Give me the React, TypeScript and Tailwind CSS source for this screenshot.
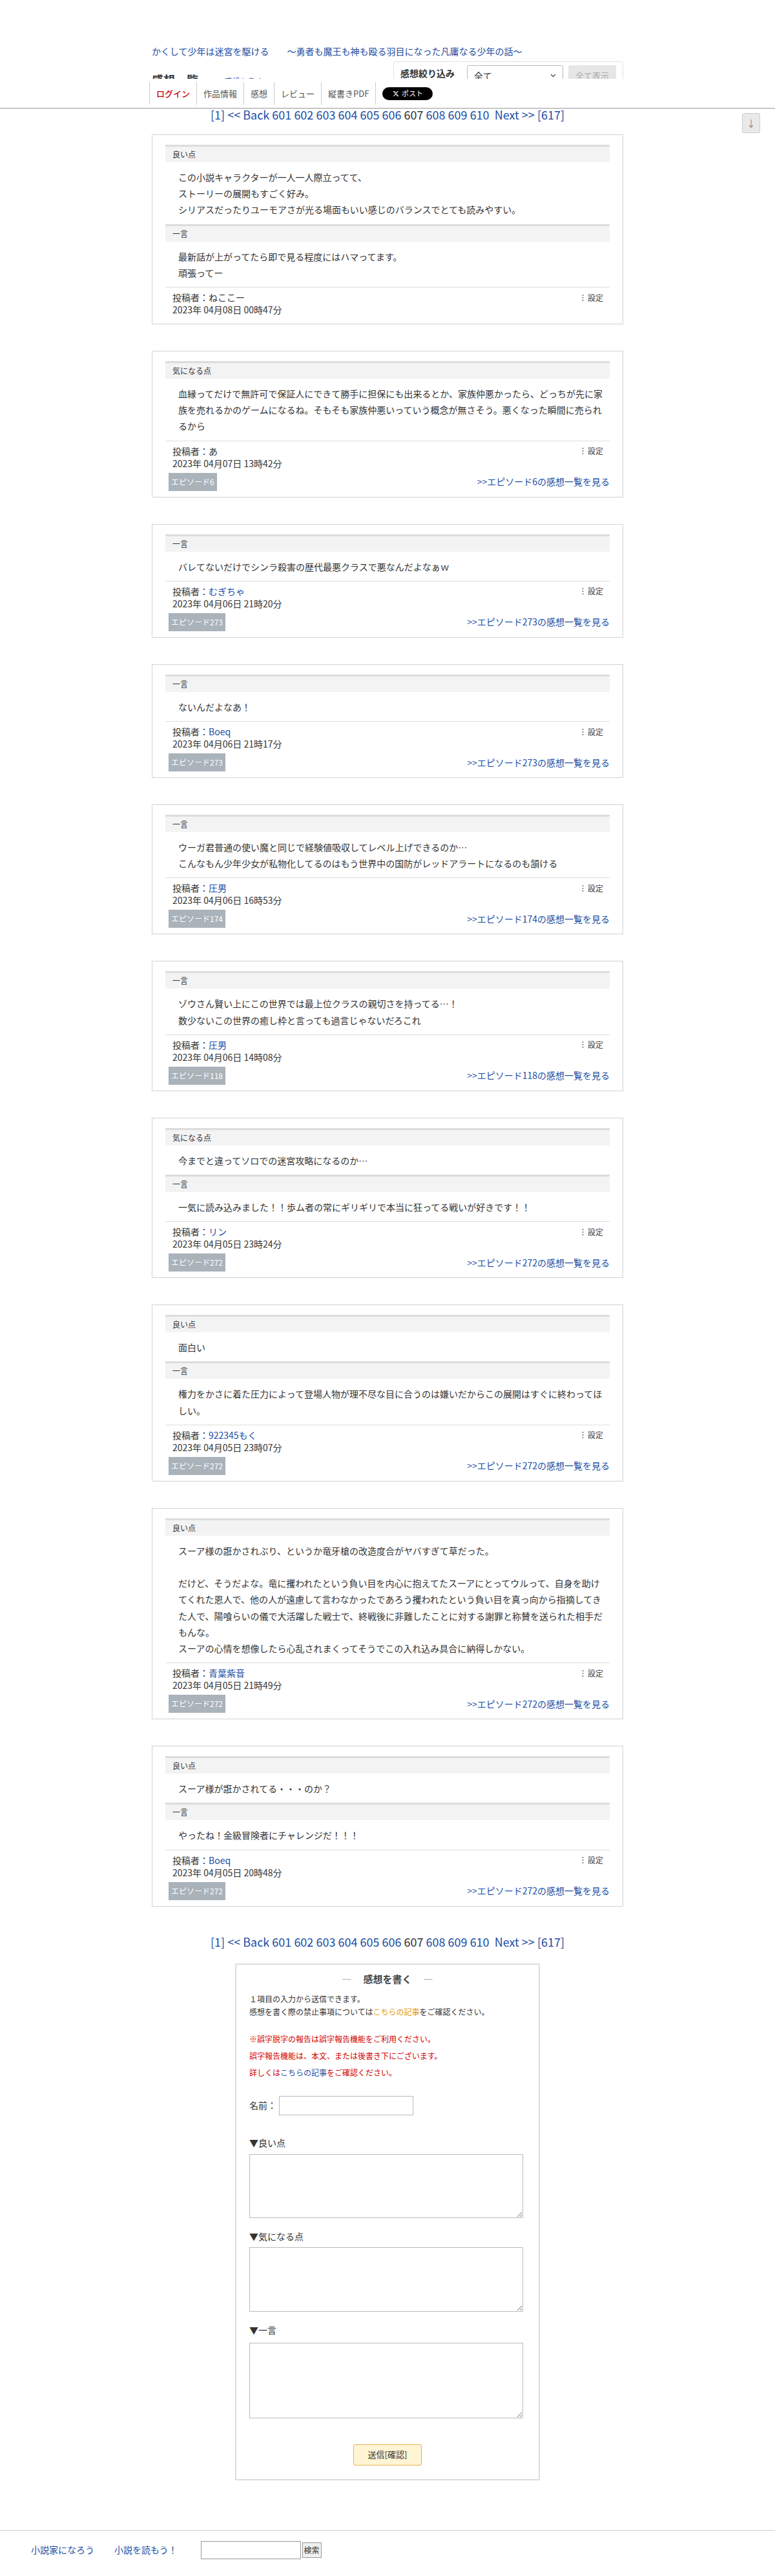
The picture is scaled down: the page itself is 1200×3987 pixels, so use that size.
import React from "react"

type Section = { label: string; lines: string[] }
type Comment = {
  sections: Section[]
  author: string
  authorLink?: boolean
  date: string
  episode?: string
}

const comments: Comment[] = [
  {
    sections: [
      {
        label: "良い点",
        lines: [
          "この小説キャラクターが一人一人際立ってて、",
          "ストーリーの展開もすごく好み。",
          "シリアスだったりユーモアさが光る場面もいい感じのバランスでとても読みやすい。",
        ],
      },
      { label: "一言", lines: ["最新話が上がってたら即で見る程度にはハマってます。", "頑張ってー"] },
    ],
    author: "ねここー",
    date: "2023年 04月08日 00時47分",
  },
  {
    sections: [
      {
        label: "気になる点",
        lines: [
          "血縁ってだけで無許可で保証人にできて勝手に担保にも出来るとか、家族仲悪かったら、どっちが先に家族を売れるかのゲームになるね。そもそも家族仲悪いっていう概念が無さそう。悪くなった瞬間に売られるから",
        ],
      },
    ],
    author: "あ",
    date: "2023年 04月07日 13時42分",
    episode: "6",
  },
  {
    sections: [{ label: "一言", lines: ["バレてないだけでシンラ殺害の歴代最悪クラスで悪なんだよなぁｗ"] }],
    author: "むぎちゃ",
    authorLink: true,
    date: "2023年 04月06日 21時20分",
    episode: "273",
  },
  {
    sections: [{ label: "一言", lines: ["ないんだよなあ！"] }],
    author: "Boeq",
    authorLink: true,
    date: "2023年 04月06日 21時17分",
    episode: "273",
  },
  {
    sections: [
      {
        label: "一言",
        lines: [
          "ウーガ君普通の使い魔と同じで経験値吸収してレベル上げできるのか…",
          "こんなもん少年少女が私物化してるのはもう世界中の国防がレッドアラートになるのも頷ける",
        ],
      },
    ],
    author: "圧男",
    authorLink: true,
    date: "2023年 04月06日 16時53分",
    episode: "174",
  },
  {
    sections: [
      {
        label: "一言",
        lines: [
          "ゾウさん賢い上にこの世界では最上位クラスの親切さを持ってる…！",
          "数少ないこの世界の癒し枠と言っても過言じゃないだろこれ",
        ],
      },
    ],
    author: "圧男",
    authorLink: true,
    date: "2023年 04月06日 14時08分",
    episode: "118",
  },
  {
    sections: [
      { label: "気になる点", lines: ["今までと違ってソロでの迷宮攻略になるのか…"] },
      {
        label: "一言",
        lines: ["一気に読み込みました！！歩ム者の常にギリギリで本当に狂ってる戦いが好きです！！"],
      },
    ],
    author: "リン",
    authorLink: true,
    date: "2023年 04月05日 23時24分",
    episode: "272",
  },
  {
    sections: [
      { label: "良い点", lines: ["面白い"] },
      {
        label: "一言",
        lines: [
          "権力をかさに着た圧力によって登場人物が理不尽な目に合うのは嫌いだからこの展開はすぐに終わってほしい。",
        ],
      },
    ],
    author: "922345もく",
    authorLink: true,
    date: "2023年 04月05日 23時07分",
    episode: "272",
  },
  {
    sections: [
      {
        label: "良い点",
        lines: [
          "スーア様の誑かされぶり、というか竜牙槍の改造度合がヤバすぎて草だった。",
          "",
          "だけど、そうだよな。竜に攫われたという負い目を内心に抱えてたスーアにとってウルって、自身を助けてくれた恩人で、他の人が遠慮して言わなかったであろう攫われたという負い目を真っ向から指摘してきた人で、陽喰らいの儀で大活躍した戦士で、終戦後に非難したことに対する謝罪と称賛を送られた相手だもんな。",
          "スーアの心情を想像したら心乱されまくってそうでこの入れ込み具合に納得しかない。",
        ],
      },
    ],
    author: "青葉紫音",
    authorLink: true,
    date: "2023年 04月05日 21時49分",
    episode: "272",
  },
  {
    sections: [
      { label: "良い点", lines: ["スーア様が誑かされてる・・・のか？"] },
      { label: "一言", lines: ["やったね！金級冒険者にチャレンジだ！！！"] },
    ],
    author: "Boeq",
    authorLink: true,
    date: "2023年 04月05日 20時48分",
    episode: "272",
  },
]

function Pager() {
  const pages = [601, 602, 603, 604, 605, 606, 607, 608, 609, 610]
  return (
    <div className="text-center text-[18px] leading-[24px] text-[#1d4ea3]">
      <a href="#">[1]</a> <a href="#">&lt;&lt; Back</a>{" "}
      {pages.map((p) =>
        p === 607 ? (
          <span key={p}>
            <span className="text-[#333]">{p}</span>{" "}
          </span>
        ) : (
          <span key={p}>
            <a href="#">{p}</a>{" "}
          </span>
        )
      )}
      {"\u00a0"}
      <a href="#">Next &gt;&gt;</a> <a href="#">[617]</a>
    </div>
  )
}

function CommentCard({ c }: { c: Comment }) {
  return (
    <div className="border border-[#d3d3d3] bg-white px-[20px] pb-[9px] pt-[15px]">
      {c.sections.map((s) => (
        <div key={s.label}>
          {/* section label */}
          <div className="border-t-[3px] border-[#dcdcdc] bg-[#f3f3f3] pl-[11px] text-[12px] leading-[24px]">
            {s.label}
          </div>
          <div className="pb-[9px] pl-[20px] pr-[4px] pt-[11px] text-[14px] leading-[25.2px]">
            {s.lines.map((l, i) => (
              <p key={i}>{l || "\u00a0"}</p>
            ))}
          </div>
        </div>
      ))}

      {/* poster info */}
      <div className={"border-t border-[#dddddd] pt-[6px] " + (c.episode ? "" : "pb-[3px]")}>
        <div className="flex items-center justify-between pl-[11px] pr-[10px]">
          <p className="text-[14px] leading-[19px]">
            投稿者：
            {c.authorLink ? <a href="#" className="text-[#1d4ea3]">{c.author}</a> : c.author}
          </p>
          <span className="flex items-center gap-[6px] text-[12px] text-[#444]">
            <svg width="3" height="12" viewBox="0 0 3 12">
              <circle cx="1.5" cy="2" r="1.1" fill="#777" />
              <circle cx="1.5" cy="6" r="1.1" fill="#777" />
              <circle cx="1.5" cy="10" r="1.1" fill="#777" />
            </svg>
            設定
          </span>
        </div>
        <p className="pl-[11px] text-[14px] leading-[19px]">{c.date}</p>
        {c.episode && (
          <div className="mt-[5px] flex items-center justify-between">
            <span className="ml-[5px] h-[28px] bg-[#aab2ba] px-[4px] text-[12px] leading-[28px] text-white">
              エピソード{c.episode}
            </span>
            <a href="#" className="text-[14px] text-[#1d4ea3]">
              &gt;&gt;エピソード{c.episode}の感想一覧を見る
            </a>
          </div>
        )}
      </div>
    </div>
  )
}

export default function App() {
  return (
    <div className="relative min-h-[3987px] bg-white font-['Noto_Sans_CJK_JP','Noto_Sans',sans-serif] text-[#333]">
      <nav className="absolute left-0 right-0 top-[122px] z-10 h-[46px] border-b border-[#999] bg-white">
        <div className="mx-auto flex h-full w-[738px] items-center text-[13px] text-[#555]">
          <a href="#" className="flex h-[35px] items-center border-l border-[#ccc] px-[10px] font-medium text-[#c8000a]">
            ログイン
          </a>
          <a href="#" className="flex h-[35px] items-center border-l border-[#ccc] px-[10px]">
            作品情報
          </a>
          <a href="#" className="flex h-[35px] items-center border-l border-[#ccc] px-[10px]">
            感想
          </a>
          <a href="#" className="flex h-[35px] items-center border-l border-[#ccc] px-[10px]">
            レビュー
          </a>
          <a href="#" className="flex h-[35px] items-center border-x border-[#ccc] px-[10px]">
            縦書きPDF
          </a>
          <a
            href="#"
            className="ml-[10px] flex h-[20px] w-[78px] items-center justify-center gap-[4px] rounded-full bg-black text-[11px] text-white"
          >
            <svg width="10" height="10" viewBox="0 0 24 24" fill="white">
              <path d="M18.244 2.25h3.308l-7.227 8.26 8.502 11.24H16.17l-5.214-6.817L4.99 21.75H1.68l7.73-8.835L1.254 2.25H8.08l4.713 6.231zm-1.161 17.52h1.833L7.084 4.126H5.117z" />
            </svg>
            ポスト
          </a>
        </div>
      </nav>

      {/* page-down button */}
      <button className="absolute right-[23px] top-[175px] z-10 flex h-[31px] w-[28px] items-center justify-center rounded-[3px] border border-[#ccc] bg-[#e9e9e9] text-[14px] text-[#888]">
        ↓
      </button>

      <main className="mx-auto w-[730px] pt-[69px]">
        <a href="#" className="block text-[14px] leading-[20px] text-[#1d4ea3]">
          かくして少年は迷宮を駆ける　　～勇者も魔王も神も殴る羽目になった凡庸なる少年の話～
        </a>

        {/* Heading + filter */}
        <div className="mt-[6px] flex h-[44px] items-start justify-between">
          <div className="flex items-baseline gap-[40px] pt-[16px]">
            <h1 className="text-[18px] font-bold leading-[24px]">感想一覧</h1>
            <a href="#" className="text-[12px] text-[#1d4ea3]">
              感想を書く
            </a>
          </div>
          <div className="flex h-[44px] w-[356px] items-start rounded-[4px] border border-[#e3e3e3] px-[10px] pt-[5px]">
            <span className="text-[14px] font-bold leading-[24px]">感想絞り込み</span>
            <div className="ml-[19px] flex h-[32px] w-[149px] items-center justify-between rounded-[3px] border border-[#bbb] px-[10px] text-[14px]">
              全て
              <svg width="9" height="6" viewBox="0 0 9 6">
                <path d="M1 1l3.5 3.5L8 1" stroke="#555" strokeWidth="1.3" fill="none" />
              </svg>
            </div>
            <button className="ml-[8px] h-[32px] w-[74px] rounded-[3px] bg-[#e6e6e6] text-[13px] text-[#aaa]">
              全て表示
            </button>
          </div>
        </div>

        <div className="mt-[26px]">
          <Pager />
        </div>

        {/* Comments */}
        <div className="mt-[19px] flex flex-col gap-[41px]">
          {comments.map((c, i) => (
            <CommentCard key={i} c={c} />
          ))}
        </div>

        <div className="mt-[42px]">
          <Pager />
        </div>

        {/* Write form */}
        <form className="mx-auto mt-[22px] w-[472px] border-2 border-[#dddddd] px-[20px] pb-[21px] pt-[10px]">
          <h2 className="text-center text-[15px] font-bold leading-[24px] text-[#444]">
            <span className="font-normal text-[#999]">―</span>
            <span className="mx-[18px]">感想を書く</span>
            <span className="font-normal text-[#999]">―</span>
          </h2>
          <div className="mt-[9px] text-[12px] leading-[20px]">
            <p>１項目の入力から送信できます。</p>
            <p>
              感想を書く際の禁止事項については<a href="#" className="text-[#e39a12]">こちらの記事</a>をご確認ください。
            </p>
          </div>
          <div className="mt-[19px] text-[12px] leading-[26px] text-[#d40000]">
            <p>※誤字脱字の報告は誤字報告機能をご利用ください。</p>
            <p>誤字報告機能は、本文、または後書き下にございます。</p>
            <p>
              詳しくは<a href="#" className="text-[#1d4ea3]">こちらの記事</a>をご確認ください。
            </p>
          </div>

          <div className="mt-[23px] flex items-center">
            <label className="w-[46px] text-[14px]">名前：</label>
            <input className="h-[30px] w-[208px] border border-[#bbb] px-[4px] text-[14px]" />
          </div>

          <p className="mt-[32px] text-[14px] leading-[20px]">▼良い点</p>
          <textarea className="mt-[8px] block h-[99px] w-[424px] border border-[#bbb]" />

          <p className="mt-[18px] text-[14px] leading-[20px]">▼気になる点</p>
          <textarea className="mt-[7px] block h-[100px] w-[424px] border border-[#bbb]" />

          <p className="mt-[18px] text-[14px] leading-[20px]">▼一言</p>
          <textarea className="mt-[10px] block h-[117px] w-[424px] border border-[#bbb]" />

          <div className="mt-[40px] flex justify-center">
            <button
              type="button"
              className="h-[33px] w-[106px] rounded-[3px] border border-[#e3b257] bg-[#fff4d4] text-[13px] text-[#333]"
            >
              送信[確認]
            </button>
          </div>
        </form>
      </main>

      {/* Footer */}
      <footer className="mt-[77px] h-[72px] border-t border-[#cccccc] pl-[48px] pt-[16px]">
        <div className="flex h-[28px] items-center text-[14px]">
          <a href="#" className="text-[#1d4ea3]">
            小説家になろう
          </a>
          <a href="#" className="ml-[31px] text-[#1d4ea3]">
            小説を読もう！
          </a>
          <input className="ml-[36px] h-[28px] w-[155px] border border-[#999]" />
          <button className="ml-[2px] h-[24px] border border-[#999] bg-[#f0f0f0] px-[2px] text-[12px]">
            検索
          </button>
        </div>
      </footer>
    </div>
  )
}
